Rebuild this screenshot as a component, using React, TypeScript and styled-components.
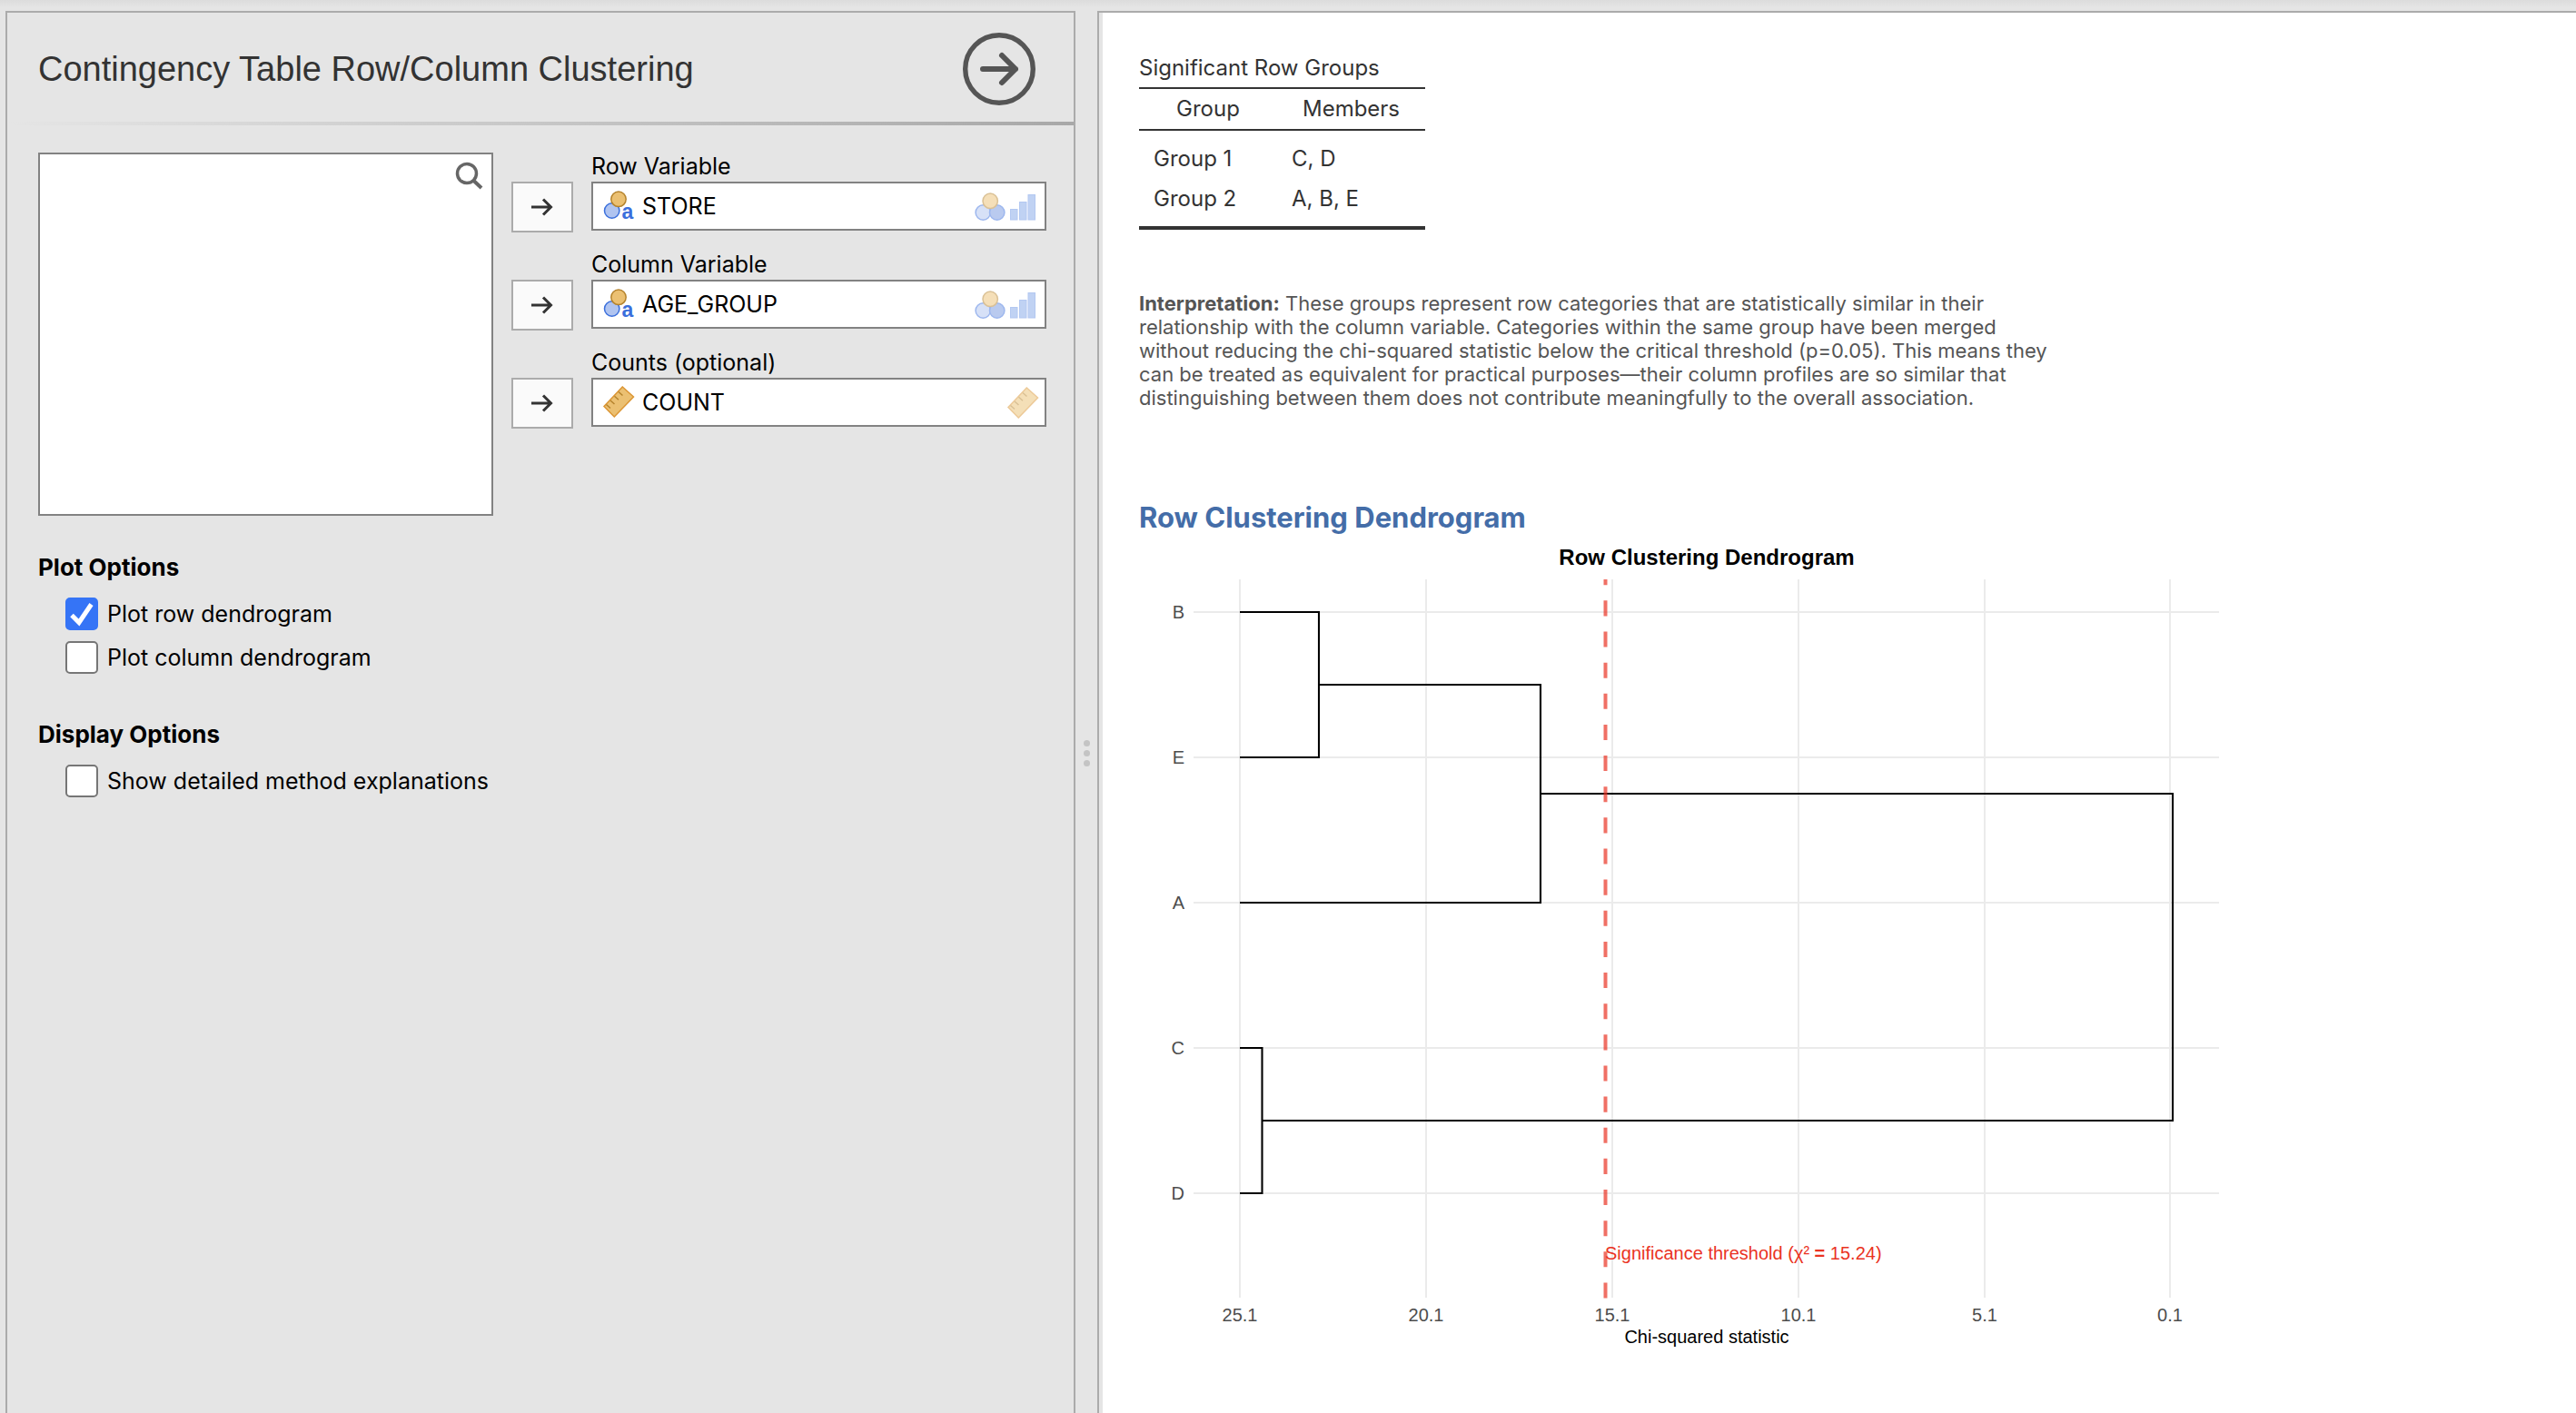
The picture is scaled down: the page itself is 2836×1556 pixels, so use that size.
import React from "react";
import styled, { createGlobalStyle } from "styled-components";

const SANS = `Inter, "Liberation Sans", sans-serif`;
const HELV = `"Liberation Sans", Arial, sans-serif`;

const GlobalStyle = createGlobalStyle`
  *, *::before, *::after { box-sizing: border-box; }
  html, body, #root { height: 100%; }
  body { margin: 0; background: #e5e5e5; font-family: ${SANS}; font-size: 25px; color: #000; }
`;

const Page = styled.div`
  display: flex;
  align-items: stretch;
  min-height: 100%;
  padding: 12px 0 0 6px;
  background: linear-gradient(#dcdcdc, #e5e5e5 8px);
`;

const OptionsPanel = styled.section`
  flex: 0 0 1178px;
  border: 2px solid #ababab;
  border-bottom: 0;
`;

const Header = styled.header`
  display: flex;
  align-items: center;
  justify-content: space-between;
  height: 124px;
  padding: 0 42px 0 34px;
  background: linear-gradient(to right, #e5e5e5, #a8a8a8) bottom / 100% 4px no-repeat;
`;

const Title = styled.h1`
  margin: 0;
  font: 400 38px/44px ${HELV};
  color: #333;
`;

const RunButton = styled.button`
  width: 80px;
  height: 80px;
  padding: 0;
  border: 0;
  background: none;
  svg { display: block; }
`;

const Body = styled.div`
  padding: 30px 30px 0 34px;
`;

const Assign = styled.div`
  display: grid;
  grid-template-columns: minmax(0, 1fr) calc(50% + 34px);
  column-gap: 20px;
`;

const SourceList = styled.div`
  display: flex;
  justify-content: flex-end;
  align-items: flex-start;
  height: 400px;
  padding: 8px 8px 0 0;
  border: 2px solid #828282;
  background: #fff;
`;

const SearchButton = styled.button`
  width: 34px;
  height: 34px;
  padding: 0;
  border: 0;
  background: none;
  svg { display: block; }
`;

const Targets = styled.div`
  display: flex;
  flex-direction: column;
`;

const TargetRow = styled.div`
  display: grid;
  grid-template-columns: 68px minmax(0, 1fr);
  grid-template-rows: 32px 56px;
  column-gap: 20px;
  margin-bottom: 20px;
`;

const TargetLabel = styled.label`
  grid-column: 2;
  line-height: 30px;
`;

const MoveButton = styled.button`
  display: flex;
  align-items: center;
  justify-content: center;
  border: 2px solid #ababab;
  padding: 0;
  background: #fafafa;
`;

const Field = styled.div`
  display: flex;
  align-items: center;
  height: 54px;
  padding: 0 6px 0 10px;
  border: 2px solid #828282;
  background: #fff;
  svg { flex: none; }
`;

const FieldInput = styled.input`
  flex: 1;
  min-width: 0;
  padding: 0 0 0 8px;
  border: 0;
  outline: 0;
  background: none;
  font: 400 25px/30px ${SANS};
  color: #000;
`;

const Group = styled.fieldset<{ $gap: number }>`
  margin: ${(p) => p.$gap}px 0 0;
  padding: 0;
  border: 0;
`;

const Legend = styled.legend`
  padding: 0;
  margin-bottom: 18px;
  font-size: 26px;
  font-weight: 700;
  line-height: 30px;
`;

const CheckRow = styled.label`
  display: flex;
  align-items: center;
  gap: 10px;
  height: 36px;
  margin: 0 0 12px 30px;
`;

const CheckBox = styled.input`
  appearance: none;
  width: 36px;
  height: 36px;
  margin: 0;
  border: 2px solid #767676;
  border-radius: 5px;
  background: #fff;
  &:checked {
    border-color: #3574f6;
    background: #3574f6
      url("data:image/svg+xml,%3Csvg xmlns='http://www.w3.org/2000/svg' viewBox='0 0 32 32'%3E%3Cpath d='M5 17.500L13 25.500L26.500 5.500' fill='none' stroke='white' stroke-width='5'/%3E%3C/svg%3E")
      center / 32px 32px no-repeat;
  }
`;

const Splitter = styled.div`
  display: flex;
  flex: 0 0 24px;
  flex-direction: column;
  align-items: center;
  gap: 4px;
  padding-top: 803px;
`;

const Dot = styled.span`
  width: 7px;
  height: 7px;
  border-radius: 50%;
  background: #c4c4c4;
`;

const Results = styled.main`
  flex: 1;
  min-width: 0;
  padding: 47px 40px 0 44px;
  border-top: 2px solid #ababab;
  border-left: 2px solid #ababab;
  background: linear-gradient(#e5e5e5, #e5e5e5) left / 4px 100% no-repeat #fff;
`;

const Table = styled.table`
  width: 315px;
  border-collapse: collapse;
  border-bottom: 4px solid #333;
  font-size: 24px;
  line-height: 28px;
  color: #333;
  caption { text-align: left; white-space: nowrap; padding-bottom: 7px; }
  th { font-weight: 400; height: 46px; padding: 0; border-top: 2px solid #333; border-bottom: 2px solid #333; }
  th:first-child { width: 152px; }
  td { height: 54px; padding: 0 16px; }
  tbody tr:first-child td { padding-top: 8px; }
  tbody tr:last-child td { padding-bottom: 8px; }
`;

const Interpretation = styled.p`
  max-width: 1010px;
  margin: 68px 0 0;
  font-size: 22px;
  line-height: 26px;
  color: #555;
`;

const SectionTitle = styled.h2`
  margin: 99px 0 10px;
  font-size: 31px;
  font-weight: 700;
  line-height: 40px;
  color: #446da8;
`;

const Chart = styled.svg`
  display: block;
  text { font-family: ${HELV}; font-size: 20px; }
`;

const ChartTitle = styled.text`
  && { font-size: 24px; font-weight: 700; }
`;

const Arrow = () => (
  <svg width="26" height="26" viewBox="0 0 26 26" fill="none" stroke="#333" strokeWidth="3">
    <path d="M1 13h22M14 4.500l8.500 8.500l-8.500 8.500" />
  </svg>
);

const NominalText = () => (
  <svg width="36" height="36" viewBox="0 0 36 36">
    <circle cx="10.700" cy="23" r="8.200" fill="#b0c4f0" stroke="#3a6fdc" strokeWidth="1.500" />
    <circle cx="18" cy="10.300" r="8.200" fill="#ebc072" stroke="#b5832d" strokeWidth="1.500" />
    <text x="21.500" y="32" fontFamily="Liberation Sans, Arial, sans-serif" fontSize="23" fontWeight="700" fill="#3a6fdc">a</text>
  </svg>
);

const RulerShape = () => (
  <g strokeWidth="1.500">
    <path d="M22.300 1L34.500 12L13.300 34L2 22.500Z" fill="#ebc072" stroke="#dc9634" />
    <path d="M4.500 20.500l4.500 4M9 16l4.500 4M13.500 11.300l4.500 4M18 6.500l4.500 4" stroke="#b5832d" fill="none" />
  </g>
);

const Ruler = () => (
  <svg width="36" height="36" viewBox="0 0 36 36"><RulerShape /></svg>
);

const AllowedRuler = () => (
  <svg width="36" height="36" viewBox="0 -1 36 36" opacity="0.5"><RulerShape /></svg>
);

const AllowedCategorical = () => (
  <svg width="72" height="36" viewBox="0 0 72 36" strokeWidth="1.500">
    <circle cx="10.300" cy="25" r="8.200" fill="#d7e1f7" stroke="#9db7ee" />
    <circle cx="25.700" cy="25" r="8.200" fill="#b9caef" stroke="#9db7ee" />
    <circle cx="18.200" cy="12.300" r="8.200" fill="#f5dfb8" stroke="#dac196" />
    <g fill="#c0d2f3" stroke="#b3c8f1" strokeWidth="1">
      <rect x="40.500" y="21.500" width="7.500" height="11.500" />
      <rect x="50.500" y="13.500" width="7.500" height="19.500" />
      <rect x="60" y="5.500" width="7.500" height="27.500" />
    </g>
  </svg>
);

const targets = [
  { id: "rows", label: "Row Variable", value: "STORE", numeric: false },
  { id: "cols", label: "Column Variable", value: "AGE_GROUP", numeric: false },
  { id: "counts", label: "Counts (optional)", value: "COUNT", numeric: true },
];

const groups = [
  { name: "Group 1", members: "C, D" },
  { name: "Group 2", members: "A, B, E" },
];

const leaves = [
  { name: "B", y: 74 }, { name: "E", y: 234 }, { name: "A", y: 394 },
  { name: "C", y: 554 }, { name: "D", y: 714 },
];

const ticks = [
  { label: "25.1", x: 111 }, { label: "20.1", x: 316 }, { label: "15.1", x: 521 },
  { label: "10.1", x: 726 }, { label: "5.1", x: 931 }, { label: "0.1", x: 1135 },
];

const Dendrogram = () => (
  <Chart width="1200" height="900" viewBox="0 0 1200 900" role="img" aria-label="Row Clustering Dendrogram">
    <ChartTitle x="625" y="22" textAnchor="middle">Row Clustering Dendrogram</ChartTitle>
    <g stroke="#ebebeb" strokeWidth="2">
      {leaves.map((l) => <path key={l.name} d={`M60 ${l.y}H1189`} />)}
      {ticks.map((t) => <path key={t.label} d={`M${t.x} 38V829`} />)}
    </g>
    <path
      d="M111 74H198V234H111M198 154H442V394H111M442 274H1138V634H135.500M111 554H135.500V714H111"
      fill="none" stroke="#000" strokeWidth="2.100"
    />
    <path d="M513.500 829.500V38" stroke="#ea3323" strokeOpacity="0.7" strokeWidth="4" strokeDasharray="17.070" />
    <text x="513" y="787" fill="#ea3323">
      Significance threshold (χ² <tspan fontWeight="700">=</tspan> 15.24)
    </text>
    <g fill="#4d4d4d">
      {leaves.map((l) => <text key={l.name} x="50" y={l.y + 7} textAnchor="end">{l.name}</text>)}
      {ticks.map((t) => <text key={t.label} x={t.x} y="855" textAnchor="middle">{t.label}</text>)}
    </g>
    <text x="625" y="879" textAnchor="middle">Chi-squared statistic</text>
  </Chart>
);

export default function App() {
  return (
    <>
      <GlobalStyle />
      <Page>
        <OptionsPanel>
          <Header>
            <Title>Contingency Table Row/Column Clustering</Title>
            <RunButton aria-label="Hide options">
              <svg width="80" height="80" viewBox="0 0 80 80" fill="none" stroke="#555" strokeLinecap="round" strokeLinejoin="round">
                <circle cx="40" cy="40" r="37.300" strokeWidth="5.400" />
                <path d="M22 40H58M43 25L58 40L43 55" strokeWidth="6" />
              </svg>
            </RunButton>
          </Header>
          <Body>
            <Assign>
              <SourceList role="listbox" aria-label="Variables">
                <SearchButton aria-label="Search">
                  <svg width="34" height="34" viewBox="0 0 34 34" fill="none" stroke="#666">
                    <circle cx="15" cy="13" r="10.500" strokeWidth="3.500" />
                    <path d="M22 20.500L31 29" strokeWidth="4" />
                  </svg>
                </SearchButton>
              </SourceList>
              <Targets>
                {targets.map((t) => (
                  <TargetRow key={t.id}>
                    <TargetLabel htmlFor={t.id}>{t.label}</TargetLabel>
                    <MoveButton aria-label={`Move to ${t.label}`}><Arrow /></MoveButton>
                    <Field>
                      {t.numeric ? <Ruler /> : <NominalText />}
                      <FieldInput id={t.id} defaultValue={t.value} readOnly />
                      {t.numeric ? <AllowedRuler /> : <AllowedCategorical />}
                    </Field>
                  </TargetRow>
                ))}
              </Targets>
            </Assign>
            <Group $gap={42}>
              <Legend>Plot Options</Legend>
              <CheckRow><CheckBox type="checkbox" defaultChecked />Plot row dendrogram</CheckRow>
              <CheckRow><CheckBox type="checkbox" />Plot column dendrogram</CheckRow>
            </Group>
            <Group $gap={40}>
              <Legend>Display Options</Legend>
              <CheckRow><CheckBox type="checkbox" />Show detailed method explanations</CheckRow>
            </Group>
          </Body>
        </OptionsPanel>
        <Splitter><Dot /><Dot /><Dot /></Splitter>
        <Results>
          <Table>
            <caption>Significant Row Groups</caption>
            <thead><tr><th scope="col">Group</th><th scope="col">Members</th></tr></thead>
            <tbody>
              {groups.map((g) => <tr key={g.name}><td>{g.name}</td><td>{g.members}</td></tr>)}
            </tbody>
          </Table>
          <Interpretation>
            <strong>Interpretation:</strong> These groups represent row categories that are statistically similar in
            their relationship with the column variable. Categories within the same group have been merged without
            reducing the chi-squared statistic below the critical threshold (p=0.05). This means they can be treated as
            equivalent for practical purposes—their column profiles are so similar that distinguishing between them does
            not contribute meaningfully to the overall association.
          </Interpretation>
          <SectionTitle>Row Clustering Dendrogram</SectionTitle>
          <Dendrogram />
        </Results>
      </Page>
    </>
  );
}
